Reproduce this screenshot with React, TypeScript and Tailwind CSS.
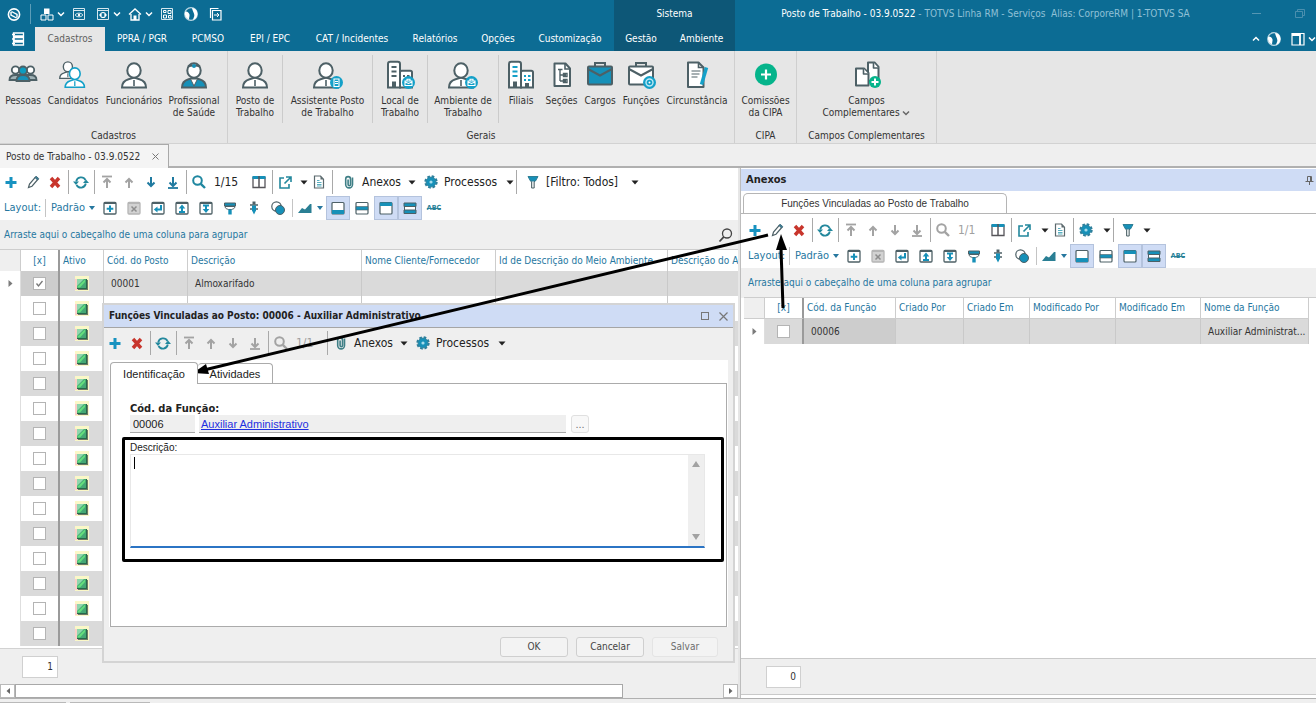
import { useState } from "react";
import type { ReactNode } from "react";
import { clsx } from "clsx";

const TEAL = "#1690b8";
const SLATE = "#4d6066";
const MUTED = "#a3a3a3";

/* ---------- Icons ---------- */

function Svg({ size = 16, box = 16, children }: { size?: number; box?: number; children: ReactNode }) {
  return (
    <svg width={size} height={size} viewBox={`0 0 ${box} ${box}`} fill="none" className="shrink-0" aria-hidden="true">
      {children}
    </svg>
  );
}

function PlusIcon() {
  return (
    <Svg>
      <path d="M8 3v11M2.5 8.5h11" stroke="#1792c0" strokeWidth="3" />
    </Svg>
  );
}

function PencilIcon() {
  return (
    <Svg>
      <path d="M3.5 13.5l1-3.5 6-7 2.5 2.2-6 7z" fill="#fff" stroke={SLATE} strokeWidth="1.2" />
      <path d="M10 3.5l1.2-1.2 2.5 2.2-1.2 1.5z" fill="#3f7f96" stroke="#3f6f80" />
    </Svg>
  );
}

function DeleteIcon() {
  return (
    <Svg>
      <path d="M4 4l8 9M12 4l-8 9" stroke="#c8352c" strokeWidth="3.4" />
    </Svg>
  );
}

function RefreshIcon() {
  return (
    <Svg>
      <path d="M3.2 7.5a5 5 0 0 1 9.3-1.5M12.8 9.5a5 5 0 0 1-9.3 1.5" stroke="#23889d" strokeWidth="1.8" />
      <path d="M0 7.5h6l-3 3.5zM10 9h6l-3-3.5z" fill="#23889d" />
    </Svg>
  );
}

function ArrowIcon({ kind, color }: { kind: "top" | "up" | "down" | "bottom"; color: string }) {
  const up = kind === "top" || kind === "up";
  return (
    <Svg>
      <path d={up ? "M8 14V5M4.5 8.5L8 5l3.5 3.5" : "M8 3v9M4.5 8.5L8 12l3.5-3.5"} stroke={color} strokeWidth="2" />
      {kind === "top" && <path d="M3 2.5h10" stroke={color} strokeWidth="1.8" />}
      {kind === "bottom" && <path d="M3 14h10" stroke={color} strokeWidth="1.8" />}
    </Svg>
  );
}

function SearchIcon({ color }: { color: string }) {
  return (
    <Svg>
      <circle cx="6.5" cy="6.5" r="4.3" stroke={color} strokeWidth="2" />
      <path d="M9.8 9.8l4.2 4.2" stroke={color} strokeWidth="2.4" />
    </Svg>
  );
}

function ColumnsIcon() {
  return (
    <Svg>
      <path d="M2 3.5h12v10H2z" stroke="#56555a" strokeWidth="1.3" />
      <path d="M1.5 2h13v3h-13z" fill={TEAL} />
      <path d="M8 2v11" stroke="#56555a" strokeWidth="1.5" />
    </Svg>
  );
}

function ExportIcon() {
  return (
    <Svg>
      <path d="M7 4H3v10h9v-4" stroke="#23889d" strokeWidth="1.6" />
      <path d="M9 3h5v5M13.5 3.5l-6 6" stroke="#23889d" strokeWidth="1.6" />
    </Svg>
  );
}

function DocIcon() {
  return (
    <Svg>
      <path d="M3.5 2h6l3 3.2V14h-9z" fill="#fff" stroke="#5a696d" strokeWidth="1.2" />
      <path d="M9.5 2v3.5h3z" fill="#5a696d" />
      <path d="M6 6.5h2.5M6 8.5h4.5M6 10.5h4.5M6 12h4.5" stroke="#59aebf" strokeWidth="1.2" />
    </Svg>
  );
}

function ClipIcon() {
  return (
    <Svg>
      <path
        d="M11.5 3.5v7a3.4 3.4 0 0 1-6.8 0V5a2.4 2.4 0 0 1 4.8 0v5.5a1.2 1.2 0 0 1-2.4 0V5.500"
        stroke="#3f7f86"
        strokeWidth="1.6"
      />
    </Svg>
  );
}

function GearIcon() {
  return (
    <Svg>
      <circle cx="8" cy="8" r="5.6" stroke="#2f7f9b" strokeWidth="2.2" strokeDasharray="2.6 1.8" />
      <circle cx="8" cy="8" r="5" fill={TEAL} stroke="#2f7f9b" strokeWidth=".8" />
      <circle cx="8" cy="8" r="1.6" fill="#a5dcec" />
    </Svg>
  );
}

function FunnelIcon() {
  return (
    <Svg>
      <path d="M5.5 6.5h4.5l-.8 1.5v6H6.6V8z" fill="#e8eef0" stroke={SLATE} strokeWidth="1" />
      <path d="M3 2.5h10l-2.500 4.5H5.500z" fill={TEAL} stroke="#2f7f96" strokeWidth="1" />
    </Svg>
  );
}

function Caret() {
  return (
    <svg width="8" height="5" viewBox="0 0 8 5" className="shrink-0" aria-hidden="true">
      <path d="M.5.5h7L4 4.5z" fill="#222" />
    </svg>
  );
}

function SmallCaret() {
  return (
    <svg width="6" height="4" viewBox="0 0 6 4" className="shrink-0" aria-hidden="true">
      <path d="M0 0h6L3 4z" fill="#26779f" />
    </svg>
  );
}

function Chevron({ color = "#fff", flip = false }: { color?: string; flip?: boolean }) {
  return (
    <svg width="8" height="6" viewBox="0 0 8 6" fill="none" className="inline shrink-0" aria-hidden="true">
      <path d={flip ? "M1 4.5l3-3 3 3" : "M1 1.5l3 3 3-3"} stroke={color} strokeWidth="1.5" />
    </svg>
  );
}

function BoxIcon({ children, muted = false }: { children?: ReactNode; muted?: boolean }) {
  const edge = muted ? "#b5b5b5" : SLATE;
  return (
    <Svg>
      <rect x="2" y="2.5" width="12" height="11.5" rx="1" fill={muted ? "#d2d2d2" : "#fff"} stroke={edge} strokeWidth="1.3" />
      <path d="M2 3h12" stroke={edge} strokeWidth="2" />
      {children}
    </Svg>
  );
}

function BrushIcon() {
  return (
    <Svg>
      <path d="M2.5 3h11v3h-11z" fill={TEAL} stroke={SLATE} />
      <path d="M3 6.5h10c0 2-2 2.5-3.5 3h-3C5 9 3 8.5 3 6.5z" fill="#fff" stroke={SLATE} />
      <path d="M6.3 9.5h3.4v5H6.3z" fill={TEAL} />
    </Svg>
  );
}

function PinBrushIcon() {
  return (
    <Svg>
      <path d="M6.5 1.5h3v3h-3z" fill={SLATE} />
      <path d="M4 5h8M4 9h8" stroke={SLATE} strokeWidth="1.6" />
      <path d="M6 5.5h4v5l-2 4-2-4z" fill={TEAL} />
    </Svg>
  );
}

function CirclesIcon() {
  return (
    <Svg>
      <circle cx="6.5" cy="6.5" r="4.7" fill="#fff" stroke={SLATE} strokeWidth="1.2" />
      <circle cx="10" cy="10" r="4.5" fill={TEAL} stroke={SLATE} />
    </Svg>
  );
}

function AreaIcon() {
  return (
    <Svg>
      <path d="M1 13l4-5 3 1.5L13 4h1.5v9z" fill="#2a7f94" />
    </Svg>
  );
}

function PanelIcon({ kind }: { kind: "bottom" | "middle" | "top" | "bands" }) {
  if (kind === "bands") {
    return (
      <Svg>
        <path d="M3 6.5h10V10H3z" fill="#fff" />
        <path d="M2 3h12v3.500H2zM2 10h12v3.500H2z" fill={TEAL} stroke={SLATE} strokeWidth="1" />
        <path d="M2.500 6.500V10M13.500 6.500V10" stroke={SLATE} />
      </Svg>
    );
  }
  return (
    <Svg>
      <rect x="2" y="2.5" width="12" height="11.5" rx="1" fill="#fff" stroke={SLATE} strokeWidth="1.2" />
      {kind === "bottom" && <path d="M2 10h12v4H2z" fill={TEAL} />}
      {kind === "middle" && <path d="M2 6.5h12V10H2z" fill={TEAL} stroke={SLATE} strokeWidth=".6" />}
      {kind === "top" && <path d="M2 2.5h12V6H2z" fill={TEAL} />}
    </Svg>
  );
}

function GlobeIcon() {
  return (
    <Svg>
      <circle cx="8" cy="8" r="6.3" stroke="#b9d6e2" strokeWidth="1.2" />
      <path
        d="M2 6c1.500-1.500 4 .5 4.500 2.500.3 1.500-.5 3-.5 4.800C3 12.500 1.500 9.500 2 6zM9 2c4 .2 5.800 3.500 5.300 7-.5 2.700-2.300 4.300-4.300 5 .2-1.800 1.500-3 1.300-5C11 6.500 9.500 5 9 2z"
        fill="#fff"
      />
    </Svg>
  );
}

function ActiveIcon() {
  return (
    <svg width="14" height="15" viewBox="0 0 14 15" className="mx-auto block" aria-label="Ativo">
      <rect width="14" height="15" fill="#fbf8c8" />
      <rect y="3" width="3" height="11" fill="#fbcfc8" />
      <rect x="3" y="4" width="10" height="10" fill="#6d7a66" />
      <rect x="2" y="3" width="10" height="10" fill="#26694a" />
      <rect x="2" y="3" width="9" height="9" fill="#45a874" />
      <path d="M2 3h7l-7 7z" fill="#8fd6ad" />
      <path d="M10 3.500v2.500L5 11.500H2.500V10.500z" fill="#63de7c" />
    </svg>
  );
}

/* 32x32 ribbon pictures */

function Person({ x = 0, stroke = SLATE, fill = "#fff" }: { x?: number; stroke?: string; fill?: string }) {
  return (
    <g transform={`translate(${x} 0)`} stroke={stroke} strokeWidth="2">
      <path d="M4 28.500c0-5 2.500-7 6.500-8.200l5.500-1.800 5.500 1.800c4 1.200 6.500 3.200 6.500 8.200z" fill={fill} />
      <ellipse cx="16" cy="11.5" rx="6.7" ry="7.3" fill="#fff" />
      <path d="M16 21v6" strokeWidth="1.6" />
    </g>
  );
}

function Badge({ children }: { children: ReactNode }) {
  return (
    <g>
      <circle cx="24.5" cy="23.5" r="6.5" fill="#14a0c8" />
      {children}
    </g>
  );
}

const caseBadge = (
  <Badge>
    <path d="M21 22h7v4.5h-7zM23 22v-1.8h3V22M21 23l3.5 1.5L28 23" stroke="#fff" strokeWidth="1.1" />
  </Badge>
);

function Buildings({ windows }: { windows: string }) {
  return (
    <g>
      <path d="M4 28.5V5c0-1.5 1-2.3 2.3-2.3h7.4c1.3 0 2.3.8 2.3 2.3v23.5z" fill="#fff" stroke={SLATE} strokeWidth="2" />
      <path d="M16 28.5v-15c0-1 .8-1.7 1.700-1.700h8.600c1 0 1.700.7 1.700 1.700v15z" fill="#fff" stroke={SLATE} strokeWidth="2" />
      <path d="M7.5 8h5M7.5 12.5h5M7.5 17h5M19 17h2M23 17h2.5M19 21h2M23 21h2.5" stroke={windows} strokeWidth="2" />
      <path d="M8 22.5h4v6H8zM20 24h4v4.5h-4z" fill={SLATE} />
    </g>
  );
}

function Briefcase({ fill }: { fill: string }) {
  return (
    <g stroke={SLATE} strokeWidth="2">
      <path d="M11 7V4h10v3" />
      <rect x="4" y="7.5" width="24" height="18" rx="1" fill={fill} />
      <path d="M4 10l12 6.5L28 10" fill="none" />
    </g>
  );
}

const ribbonIcons: Record<string, ReactNode> = {
  people: (
    <g strokeWidth="1.8" stroke={SLATE}>
      <path d="M2.5 21c0-3.500 2-5 6-5h15c4 0 6 1.500 6 5z" fill="#9fb1b5" />
      <circle cx="8.500" cy="11" r="3.7" fill="#fff" />
      <circle cx="23.500" cy="11" r="3.7" fill="#fff" />
      <path d="M9.5 22c0-4.500 2-6 6.500-6s6.500 1.500 6.500 6z" fill={TEAL} />
      <circle cx="16" cy="11.5" r="4" fill="#0d9cc0" />
    </g>
  ),
  candidates: (
    <g>
      <g transform="translate(0 0) scale(.68)">
        <Person />
      </g>
      <g transform="translate(5 5.5) scale(.8)">
        <Person stroke="#12a0c8" />
      </g>
    </g>
  ),
  person: <Person />,
  doctor: (
    <g>
      <Person fill={TEAL} />
      <path d="M12.500 20h7L16 27z" fill="#fff" stroke={SLATE} />
      <path d="M10 7.500c3-1.500 9-1.500 12 0" stroke={SLATE} strokeWidth="2" />
      <circle cx="16" cy="7" r="2" fill={TEAL} />
    </g>
  ),
  assistant: (
    <g>
      <Person x={-2} />
      <Badge>
        <path d="M22 20h5v7.5h-5zM23 22.5h3M23 24.5h3" stroke="#fff" strokeWidth="1.1" />
      </Badge>
    </g>
  ),
  place: (
    <g>
      <Buildings windows={SLATE} />
      {caseBadge}
    </g>
  ),
  environment: (
    <g>
      <Person x={-2} />
      {caseBadge}
    </g>
  ),
  branches: <Buildings windows="#14a0c8" />,
  sections: (
    <g stroke={SLATE}>
      <path d="M8.500 4.500h11l4.500 5V27H8.500z" fill="#fff" strokeWidth="2" strokeLinejoin="round" />
      <path d="M19 4.500V10h5" strokeWidth="1.6" />
      <path d="M12 10.500h4.500M14 10.500V22M14 16h6M14 22h6M17.500 14.500H21v3h-3.500zM17.500 20.500H21v3h-3.500z" strokeWidth="1.4" />
    </g>
  ),
  jobs: <Briefcase fill={TEAL} />,
  roles: (
    <g>
      <Briefcase fill="#fff" />
      <Badge>
        <circle cx="24.5" cy="23.5" r="3.5" stroke="#bfe9f5" strokeWidth="1.4" />
        <circle cx="24.5" cy="23.5" r="1" fill="#fff" />
      </Badge>
    </g>
  ),
  circumstance: (
    <g>
      <path d="M7 3.500h10.500l5 5V28H7z" fill="#fff" stroke={SLATE} strokeWidth="2" strokeLinejoin="round" />
      <path d="M17.500 3.500v5h5" stroke={SLATE} strokeWidth="1.6" />
      <path d="M10.500 12h9M10.500 15h8M10.500 18h6" stroke="#8a979b" strokeWidth="1.3" />
      <path d="M25.500 8.500l-5 17" stroke="#14a0c8" strokeWidth="3.5" />
    </g>
  ),
  cipa: (
    <g>
      <circle cx="16" cy="15.5" r="11" fill="#05b48b" />
      <path d="M16 10.500v10M11 15.500h10" stroke="#fff" strokeWidth="2.2" />
    </g>
  ),
  fields: (
    <g>
      <g stroke={SLATE} strokeWidth="2" strokeLinejoin="round" fill="#fff">
        <path d="M17 3.500h6.500l4 4.500V22H17z" />
        <path d="M22.500 3.500V9h5" strokeWidth="1.6" />
        <path d="M5 9.500h8l4.500 4.500v12.500H5z" />
        <path d="M12.500 9.500V15h5" strokeWidth="1.6" />
      </g>
      <circle cx="24" cy="23" r="6" fill="#05b48b" />
      <path d="M24 19.500v7M20.500 23h7" stroke="#fff" strokeWidth="2" />
    </g>
  ),
};

/* ---------- Header ---------- */

const menuTabs = [
  { label: "Cadastros", width: "w-[70px]" },
  { label: "PPRA / PGR", width: "w-[74px]" },
  { label: "PCMSO", width: "w-[58px]" },
  { label: "EPI / EPC", width: "w-[66px]" },
  { label: "CAT / Incidentes", width: "w-[98px]" },
  { label: "Relatórios", width: "w-[68px]" },
  { label: "Opções", width: "w-[58px]" },
  { label: "Customização", width: "w-[86px]" },
];

function QuickButton({ label, menu = false, children }: { label: string; menu?: boolean; children: ReactNode }) {
  return (
    <button type="button" aria-label={label} className="flex items-center">
      <span className="flex w-5 justify-center">{children}</span>
      {menu && <Chevron />}
    </button>
  );
}

function Header() {
  const [active, setActive] = useState("Cadastros");
  return (
    <header className="flex h-[51px] bg-[#0c6c94] text-white">
      <div className="flex w-[614px] shrink-0 flex-col">
        <div className="flex h-[27px] items-center gap-1 pl-1">
          <QuickButton label="TOTVS">
            <Svg>
              <circle cx="8" cy="8.5" r="5.6" stroke="#fff" strokeWidth="1.6" />
              <path d="M5.5 5.5l5.5 3v3M5 6v3l5.5 3" stroke="#fff" strokeWidth="1.4" />
            </Svg>
          </QuickButton>
          <span className="mx-[2px] h-5 w-px bg-[#5c9db8]" />
          <QuickButton label="Módulos" menu>
            <Svg>
              <path d="M5 2.5h5.5V8H5z" fill="#fff" />
              <path d="M2 9h5v5H2zM9 9h5v5H9z" stroke="#fff" />
            </Svg>
          </QuickButton>
          <QuickButton label="Visualizar">
            <Svg>
              <path d="M2.5 2.5h11v11h-11zM2.5 4.500h11" stroke="#d6e7ee" />
              <path d="M4 9c2-2.5 6-2.5 8 0-2 2.500-6 2.500-8 0z" stroke="#d6e7ee" />
              <circle cx="8" cy="9" r="1.2" fill="#fff" />
            </Svg>
          </QuickButton>
          <QuickButton label="Atualizar visão" menu>
            <Svg>
              <path d="M2.5 2.5h11v11h-11zM2.5 4.500h11" stroke="#d6e7ee" />
              <circle cx="8" cy="9" r="2.5" stroke="#fff" strokeWidth="1.2" />
              <path d="M4 9h3M9 9h3" stroke="#fff" />
            </Svg>
          </QuickButton>
          <QuickButton label="Início" menu>
            <Svg>
              <path d="M2 8.5l6-5.500 6 5.500M4 8v6h8V8" stroke="#fff" strokeWidth="1.3" />
              <path d="M6.5 9.500h3V14h-3z" fill="#fff" />
            </Svg>
          </QuickButton>
          <QuickButton label="Painéis">
            <Svg>
              <path d="M2.5 2.5h11v11h-11z" stroke="#d6e7ee" />
              <path d="M4.5 4.5H7v2H4.500zM9 4.500h3v3H9zM4.500 9h3v3h-3zM9.500 9.500H12V12H9.500z" stroke="#fff" />
            </Svg>
          </QuickButton>
          <QuickButton label="Idioma">
            <GlobeIcon />
          </QuickButton>
          <QuickButton label="Sair">
            <Svg>
              <path d="M3.500 12V2.500h8M5.500 4.500H14V14H5.500z" stroke="#fff" strokeWidth="1.2" />
              <path d="M7 9h5M10 7l2 2-2 2" stroke="#fff" />
            </Svg>
          </QuickButton>
        </div>
        <nav className="flex h-6">
          <button type="button" aria-label="Menu" className="flex w-[35px] items-center justify-center">
            <Svg>
              <path d="M3.500 2h10v3h-10zM3.500 6.500h10v3h-10zM3.500 11h10v3h-10z" stroke="#fff" strokeWidth="1.3" />
              <path d="M2 3.500h3M2 8h3M2 12.500h3" stroke="#fff" strokeWidth="1.3" />
            </Svg>
          </button>
          {menuTabs.map((tab) => (
            <button
              key={tab.label}
              type="button"
              onClick={() => setActive(tab.label)}
              className={clsx(tab.width, "whitespace-nowrap", active === tab.label && "bg-[#e6e6e6] text-[#5f5f5f]")}
            >
              {tab.label}
            </button>
          ))}
        </nav>
      </div>

      <div className="flex w-[121px] shrink-0 flex-col bg-[#0d5777]">
        <div className="flex h-[27px] items-center justify-center">Sistema</div>
        <div className="flex h-6">
          <button type="button" className="w-[54px]">Gestão</button>
          <button type="button" className="w-[67px]">Ambiente</button>
        </div>
      </div>

      <div className="flex min-w-0 flex-1 flex-col">
        <div className="flex h-[27px] items-center">
          <h1 className="flex-1 whitespace-pre text-center text-[#8fc0d6]">
            <span className="text-white">Posto de Trabalho - 03.9.0522</span> - TOTVS Linha RM - Serviços{"  "}Alias: CorporeRM | 1-TOTVS SA
          </h1>
          <button type="button" aria-label="Minimizar" className="flex w-10 justify-center">
            <span className="h-px w-[9px] bg-[#5596b3]" />
          </button>
          <button type="button" aria-label="Restaurar" className="flex w-10 justify-center pl-2">
            <Svg size={12} box={12}>
              <path d="M1.500 3.500h7v6h-7zM3.500 3.500v-2h7v6h-2" stroke="#4a8fae" />
            </Svg>
          </button>
        </div>
        <div className="flex h-6 items-center justify-end gap-1">
          <button type="button" aria-label="Recolher" className="flex"><Chevron flip /></button>
          <QuickButton label="Idioma"><GlobeIcon /></QuickButton>
          <QuickButton label="Painel" menu>
            <Svg>
              <path d="M2 2.5h12V14H2z" stroke="#fff" strokeWidth="1.2" />
              <path d="M2 2.5h8v2.500H2z" fill="#fff" />
              <path d="M10 2.500V14" stroke="#fff" strokeWidth="1.800" />
            </Svg>
          </QuickButton>
        </div>
      </div>
    </header>
  );
}

/* ---------- Ribbon ---------- */

function RibbonButton({ icon, width, lines, menu = false }: { icon: string; width: string; lines: string[]; menu?: boolean }) {
  return (
    <button type="button" className={clsx(width, "flex shrink-0 flex-col items-center pt-2 leading-3 whitespace-nowrap")}>
      <Svg size={32} box={32}>{ribbonIcons[icon]}</Svg>
      <span className="mt-1 block">{lines[0]}</span>
      {lines[1] && (
        <span className="block">
          {lines[1]} {menu && <Chevron color="#666" />}
        </span>
      )}
    </button>
  );
}

function RibbonGroup({ title, width, children }: { title: string; width: string; children: ReactNode }) {
  return (
    <section className={clsx(width, "flex shrink-0 flex-col border-r border-[#cfcfcf]")}>
      <div className="flex flex-1">{children}</div>
      <div className="h-[15px] text-center leading-[15px]">{title}</div>
    </section>
  );
}

function RibbonRule() {
  return <span className="mt-1 h-[68px] w-px bg-[#cbcbcb]" />;
}

function Ribbon() {
  return (
    <div className="flex h-[93px] border-b border-[#d2d2d2] bg-[#e6e6e6] text-[#333]">
      <RibbonGroup title="Cadastros" width="w-[228px]">
        <RibbonButton icon="people" width="w-[46px]" lines={["Pessoas"]} />
        <RibbonButton icon="candidates" width="w-[54px]" lines={["Candidatos"]} />
        <RibbonButton icon="person" width="w-[68px]" lines={["Funcionários"]} />
        <RibbonButton icon="doctor" width="w-[52px]" lines={["Profissional", "de Saúde"]} />
      </RibbonGroup>
      <RibbonGroup title="Gerais" width="w-[507px]">
        <RibbonButton icon="person" width="w-[54px]" lines={["Posto de", "Trabalho"]} />
        <RibbonRule />
        <RibbonButton icon="assistant" width="w-[89px]" lines={["Assistente Posto", "de Trabalho"]} />
        <RibbonRule />
        <RibbonButton icon="place" width="w-[54px]" lines={["Local de", "Trabalho"]} />
        <RibbonRule />
        <RibbonButton icon="environment" width="w-[70px]" lines={["Ambiente de", "Trabalho"]} />
        <RibbonRule />
        <RibbonButton icon="branches" width="w-[44px]" lines={["Filiais"]} />
        <RibbonButton icon="sections" width="w-[37px]" lines={["Seções"]} />
        <RibbonButton icon="jobs" width="w-[40px]" lines={["Cargos"]} />
        <RibbonButton icon="roles" width="w-[42px]" lines={["Funções"]} />
        <RibbonButton icon="circumstance" width="w-[70px]" lines={["Circunstância"]} />
      </RibbonGroup>
      <RibbonGroup title="CIPA" width="w-[62px]">
        <RibbonButton icon="cipa" width="w-[61px]" lines={["Comissões", "da CIPA"]} />
      </RibbonGroup>
      <RibbonGroup title="Campos Complementares" width="w-[140px]">
        <RibbonButton icon="fields" width="w-[139px]" lines={["Campos", "Complementares"]} menu />
      </RibbonGroup>
    </div>
  );
}

/* ---------- Toolbars ---------- */

function ToolButton({ label, children, on = false, wide = false }: { label: string; children: ReactNode; on?: boolean; wide?: boolean }) {
  return (
    <button
      type="button"
      aria-label={label}
      className={clsx(
        "flex h-6 shrink-0 items-center justify-center",
        wide ? "w-6" : "w-[22px]",
        on && "border border-[#b4c3dd] bg-[#cfdcf5]",
      )}
    >
      {children}
    </button>
  );
}

function ToolRule({ short = false }: { short?: boolean }) {
  return <span className={clsx("mr-px ml-[2px] w-px shrink-0", short ? "h-[18px] bg-[#c4c4c4]" : "h-6 bg-[#a9a9a9]")} />;
}

function ToolMenu({ label, width, icon, text }: { label: string; width: string; icon: ReactNode; text?: string }) {
  return (
    <button type="button" aria-label={label} className={clsx(width, "flex h-6 shrink-0 items-center")}>
      <span className="flex w-[22px] shrink-0 justify-center">{icon}</span>
      {text && <span className="ml-[2px] whitespace-nowrap text-xs">{text}</span>}
      <span className="ml-auto flex"><Caret /></span>
    </button>
  );
}

interface RecordToolbarProps {
  position: string;
  browsing?: boolean;
  editable?: boolean;
  children?: ReactNode;
}

function RecordToolbar({ position, browsing = false, editable = true, children }: RecordToolbarProps) {
  const next = browsing ? "#1f7aa0" : MUTED;
  return (
    <div role="toolbar" className="flex h-7 items-center text-[#222]">
      <ToolButton label="Incluir"><PlusIcon /></ToolButton>
      {editable && <ToolButton label="Editar"><PencilIcon /></ToolButton>}
      <ToolButton label="Excluir"><DeleteIcon /></ToolButton>
      <ToolRule />
      <ToolButton label="Atualizar"><RefreshIcon /></ToolButton>
      <ToolRule />
      <ToolButton label="Primeiro"><ArrowIcon kind="top" color={MUTED} /></ToolButton>
      <ToolButton label="Anterior"><ArrowIcon kind="up" color={MUTED} /></ToolButton>
      <ToolButton label="Próximo"><ArrowIcon kind="down" color={next} /></ToolButton>
      <ToolButton label="Último"><ArrowIcon kind="bottom" color={next} /></ToolButton>
      <ToolRule />
      <ToolButton label="Procurar"><SearchIcon color={browsing ? "#1f87a0" : MUTED} /></ToolButton>
      <span className={clsx("shrink-0 pl-1 text-xs", browsing ? "w-[38px]" : "w-[33px] text-[#a0a0a0]")}>{position}</span>
      {children}
    </div>
  );
}

function LayoutToolbar() {
  return (
    <div role="toolbar" className="flex h-6 items-center text-[11px] text-[#26779f]">
      <span className="w-[43px] shrink-0 pl-1">Layout:</span>
      <ToolRule short />
      <button type="button" className="flex h-6 w-[51px] shrink-0 items-center gap-1 pl-1">
        Padrão
        <SmallCaret />
      </button>
      <ToolButton wide label="Novo layout">
        <BoxIcon><path d="M8 5.500V12M4.700 8.800h6.600" stroke={TEAL} strokeWidth="2" /></BoxIcon>
      </ToolButton>
      <ToolButton wide label="Remover layout">
        <BoxIcon muted><path d="M5.500 6.500l5 5M10.500 6.500l-5 5" stroke="#8d8d8d" strokeWidth="1.5" /></BoxIcon>
      </ToolButton>
      <ToolButton wide label="Restaurar layout">
        <BoxIcon><path d="M11 5v4.500H6" stroke={TEAL} strokeWidth="2" /><path d="M7.500 6.500v6L3.800 9.500z" fill={TEAL} /></BoxIcon>
      </ToolButton>
      <ToolButton wide label="Exportar layout">
        <BoxIcon><path d="M8 7v5.500M5 12h6" stroke={TEAL} strokeWidth="2" /><path d="M4.700 8.500h6.600L8 4.500z" fill={TEAL} /></BoxIcon>
      </ToolButton>
      <ToolButton wide label="Importar layout">
        <BoxIcon><path d="M8 5v5M5 5.500h6" stroke={TEAL} strokeWidth="2" /><path d="M4.700 9h6.600L8 13z" fill={TEAL} /></BoxIcon>
      </ToolButton>
      <ToolButton wide label="Formatar"><BrushIcon /></ToolButton>
      <ToolButton wide label="Fixar formato"><PinBrushIcon /></ToolButton>
      <ToolButton wide label="Cores"><CirclesIcon /></ToolButton>
      <ToolRule short />
      <button type="button" aria-label="Gráfico" className="mr-[3px] flex h-6 w-[29px] shrink-0 items-center gap-1 pl-[3px]">
        <AreaIcon />
        <SmallCaret />
      </button>
      <ToolButton wide on label="Rodapé"><PanelIcon kind="bottom" /></ToolButton>
      <ToolButton wide label="Linha central"><PanelIcon kind="middle" /></ToolButton>
      <ToolButton wide on label="Cabeçalho"><PanelIcon kind="top" /></ToolButton>
      <ToolButton wide on label="Linhas alternadas"><PanelIcon kind="bands" /></ToolButton>
      <ToolButton wide label="Quebra de texto">
        <span className="text-[7px] font-bold text-[#2a8299] line-through">ABC</span>
      </ToolButton>
    </div>
  );
}

function GroupBar({ children }: { children?: ReactNode }) {
  return (
    <div className="flex h-[30px] items-center justify-between border-b border-[#cdcdcd] bg-[#efefef] px-1 text-[#26779f]">
      Arraste aqui o cabeçalho de uma coluna para agrupar
      {children}
    </div>
  );
}

function TickBox({ label, checked = false }: { label: string; checked?: boolean }) {
  return (
    <span className="mx-auto grid size-[13px]">
      <input
        type="checkbox"
        aria-label={label}
        defaultChecked={checked}
        className="peer col-start-1 row-start-1 size-[13px] appearance-none border border-[#b4b4b4] bg-white"
      />
      <svg
        width="13"
        height="13"
        viewBox="0 0 13 13"
        fill="none"
        className="pointer-events-none invisible col-start-1 row-start-1 peer-checked:visible"
        aria-hidden="true"
      >
        <path d="M3.500 6.500l2 2.500 4-5" stroke="#777" strokeWidth="1.3" />
      </svg>
    </span>
  );
}

function RowMarker() {
  return (
    <svg width="5" height="7" viewBox="0 0 5 7" className="mx-auto block" aria-hidden="true">
      <path d="M.5 0l4 3.500-4 3.500z" fill="#7b7b7b" />
    </svg>
  );
}

/* ---------- Left grid ---------- */

const headCell = "border-r border-[#cdcdcd] px-[3px] text-left font-normal whitespace-nowrap overflow-hidden";
const bodyCell = "border-r border-[#c9c9c9] px-[7px] whitespace-nowrap overflow-hidden";

function PostoGrid() {
  const rows = Array.from({ length: 15 }, (_, i) => i);
  return (
    <div className="flex-1 overflow-hidden bg-white">
      <table className="w-full table-fixed border-separate border-spacing-0">
        <colgroup>
          <col className="w-[21px]" />
          <col className="w-[39px]" />
          <col className="w-[44px]" />
          <col className="w-[84px]" />
          <col className="w-[174px]" />
          <col className="w-[134px]" />
          <col className="w-[172px]" />
          <col />
        </colgroup>
        <thead>
          <tr className="h-[21px] text-[#26779f]">
            <th className="border-r border-[#cdcdcd] bg-[#efefef]" aria-label="Marcador" />
            <th className="border-r-2 border-[#9a9a9a] p-0 text-center font-normal">[x]</th>
            <th className={headCell}>Ativo</th>
            <th className={headCell}>Cód. do Posto</th>
            <th className={headCell}>Descrição</th>
            <th className={headCell}>Nome Cliente/Fornecedor</th>
            <th className={headCell}>Id de Descrição do Meio Ambiente</th>
            <th className="overflow-hidden py-0 pr-0 pl-[3px] text-left font-normal whitespace-nowrap">Descrição do Am</th>
          </tr>
        </thead>
        <tbody>
          {rows.map((i) => (
            <tr key={i} className={clsx("h-[25px]", i % 2 === 0 && "bg-[#dadada]")}>
              <td className="border-r border-[#dedede] bg-white p-0">{i === 0 && <RowMarker />}</td>
              <td className={clsx("border-r-2 border-[#9a9a9a] p-0", i === 0 && "bg-[#cdcdcd]")}>
                <TickBox label={`Selecionar linha ${i + 1}`} checked={i === 0} />
              </td>
              <td className="border-r border-[#c9c9c9] p-0"><ActiveIcon /></td>
              <td className={bodyCell}>{i === 0 && "00001"}</td>
              <td className={bodyCell}>{i === 0 && "Almoxarifado"}</td>
              <td className={bodyCell} />
              <td className={bodyCell} />
              <td />
            </tr>
          ))}
        </tbody>
      </table>
    </div>
  );
}

function PostoPanel() {
  return (
    <section className="relative flex min-w-0 flex-col overflow-hidden bg-white">
      <RecordToolbar position="1/15" browsing>
        <ToolButton label="Colunas"><ColumnsIcon /></ToolButton>
        <ToolRule />
        <ToolMenu label="Exportar" width="w-[34px]" icon={<ExportIcon />} />
        <ToolButton label="Relatório"><DocIcon /></ToolButton>
        <ToolRule />
        <ToolMenu label="Anexos" width="ml-1 w-[78px]" icon={<ClipIcon />} text="Anexos" />
        <ToolMenu label="Processos" width="ml-1 w-[94px]" icon={<GearIcon />} text="Processos" />
        <ToolRule />
        <ToolMenu label="Filtro" width="ml-1 w-[117px]" icon={<FunnelIcon />} text="[Filtro: Todos]" />
      </RecordToolbar>
      <LayoutToolbar />
      <GroupBar>
        <button type="button" aria-label="Localizar" className="flex">
          <Svg>
            <circle cx="9" cy="6.5" r="4.5" stroke="#444" strokeWidth="1.3" />
            <path d="M5.8 9.8l-4.300 4.700" stroke="#444" strokeWidth="1.8" />
          </Svg>
        </button>
      </GroupBar>
      <PostoGrid />
      <div className="flex h-9 items-center border-t border-[#d2d2d2] bg-[#efefef] pl-[22px]">
        <output className="h-[22px] w-9 border border-[#d0d0d0] bg-white pr-1 text-right leading-5">1</output>
      </div>
      <div className="flex h-[14px] bg-[#efefef]">
        <button type="button" aria-label="Rolar à esquerda" className="flex w-[15px] items-center justify-center border border-[#b9b9b9] bg-white">
          <svg width="4" height="6" viewBox="0 0 4 6" aria-hidden="true"><path d="M4 0L.5 3 4 6z" fill="#666" /></svg>
        </button>
        <span className="w-[608px] border border-[#a8a8a8] bg-white" />
        <button type="button" aria-label="Rolar à direita" className="ml-auto flex w-[15px] items-center justify-center border border-[#b9b9b9] bg-white">
          <svg width="4" height="6" viewBox="0 0 4 6" aria-hidden="true"><path d="M0 0l3.500 3L0 6z" fill="#666" /></svg>
        </button>
      </div>
      <FuncaoDialog />
    </section>
  );
}

/* ---------- Dialog ---------- */

function FuncaoDialog() {
  return (
    <div
      role="dialog"
      aria-labelledby="dialog-title"
      className="absolute top-[135px] left-[102px] flex h-[360px] w-[633px] flex-col border-2 border-[#d4d4d4] bg-[#efefef]"
    >
      <div className="flex h-[23px] shrink-0 items-center border-b border-[#a5a5a5] bg-[#cfdcf5] pl-[5px]">
        <h2 id="dialog-title" className="flex-1 font-bold whitespace-nowrap text-[#222]">
          Funções Vinculadas ao Posto: 00006 - Auxiliar Administrativo
        </h2>
        <button type="button" aria-label="Maximizar" className="flex w-[19px] justify-center">
          <span className="size-2 border border-[#777]" />
        </button>
        <button type="button" aria-label="Fechar" className="flex w-[19px] justify-center">
          <Svg size={9} box={9}><path d="M.5.5l8 8M8.5.5l-8 8" stroke="#777" strokeWidth="1.2" /></Svg>
        </button>
      </div>
      <div className="h-8 shrink-0 pt-px">
        <RecordToolbar position="1/1" editable={false}>
          <ToolRule />
          <ToolMenu label="Anexos" width="ml-px w-[78px]" icon={<ClipIcon />} text="Anexos" />
          <ToolMenu label="Processos" width="ml-1 w-[94px]" icon={<GearIcon />} text="Processos" />
        </RecordToolbar>
      </div>

      <div className="mx-[5px] flex flex-1 flex-col bg-white font-['Liberation_Sans',Arial,sans-serif] text-[11px] text-[#222]">
        <div role="tablist" className="flex h-[23px] items-end pl-px">
          <button type="button" role="tab" aria-selected="true" className="z-10 -mb-px h-[22px] w-[88px] rounded-t-[4px] border border-b-0 border-[#ababab] bg-white">
            Identificação
          </button>
          <button type="button" role="tab" aria-selected="false" className="h-5 w-[75px] rounded-t-[4px] border border-b-0 border-l-0 border-[#ababab] bg-white">
            Atividades
          </button>
        </div>
        <div className="mx-px flex-1 border border-[#ababab] pt-[19px] pl-[11px]">
          <label htmlFor="codigo" className="ml-2 block h-3 font-['DejaVu_Sans_Condensed','DejaVu_Sans',sans-serif] leading-3 font-bold">
            Cód. da Função:
          </label>
          <div className="ml-2 flex">
            <input id="codigo" defaultValue="00006" readOnly className="h-[18px] w-[65px] border-b border-[#a8a8a8] bg-[#efefef] px-[3px]" />
            <span className="ml-1 flex h-[18px] w-[367px] items-center border-b border-[#a8a8a8] bg-[#efefef] pl-[2px]">
              <a href="#auxiliar-administrativo" className="text-[#1f2fe0] underline">Auxiliar Administrativo</a>
            </span>
            <button type="button" aria-label="Procurar função" className="ml-[5px] h-[18px] w-[18px] rounded-[3px] border border-[#e0e0e0] bg-[#f8f8f8] leading-4 text-[#777]">
              ...
            </button>
          </div>
          <div className="mt-1 h-[125px] w-[602px] rounded-[2px] border-3 border-black pt-[2px] pl-[5px]">
            <label htmlFor="descricao" className="block h-3 text-[10px] leading-3">Descrição:</label>
            <div className="relative flex h-[94px] w-[575px] border border-b-2 border-[#e8e8e8] border-b-[#2b74c4]">
              <textarea id="descricao" className="flex-1 resize-none px-[3px] outline-none" />
              <span className="absolute top-[2px] left-[3px] h-3 w-px bg-black" />
              <div className="flex w-4 flex-col justify-between bg-[#efefef] py-[6px]">
                <svg width="8" height="6" viewBox="0 0 8 6" className="mx-auto" aria-hidden="true"><path d="M0 6l4-6 4 6z" fill="#a2a2a2" /></svg>
                <svg width="8" height="6" viewBox="0 0 8 6" className="mx-auto" aria-hidden="true"><path d="M0 0l4 6 4-6z" fill="#a2a2a2" /></svg>
              </div>
            </div>
          </div>
        </div>
      </div>

      <div className="flex h-[34px] shrink-0 items-center justify-end gap-2 pt-[6px] pr-[15px] text-[#444]">
        <button type="button" className="h-5 w-[68px] rounded-[3px] border border-[#cfcfcf] bg-[#f3f3f3]">OK</button>
        <button type="button" className="h-5 w-[68px] rounded-[3px] border border-[#cfcfcf] bg-[#f3f3f3]">Cancelar</button>
        <button type="button" disabled className="h-5 w-[66px] rounded-[3px] border border-[#e4e4e4] bg-[#f3f3f3] text-[#6d6d6d]">Salvar</button>
      </div>
    </div>
  );
}

/* ---------- Right panel ---------- */

function AnexosPanel() {
  return (
    <aside className="flex min-w-0 flex-col border-l border-[#bdbdbd] bg-white">
      <div className="mt-px flex h-[22px] items-center justify-between bg-[#cfdcf5] pr-[2px] pl-[5px]">
        <h2 className="text-[11px] font-bold text-[#222]">Anexos</h2>
        <button type="button" aria-label="Fixar painel" className="flex">
          <Svg size={9} box={9}><path d="M2.5.5h4v5M2.5.5v5M.5 5.5h8M4.5 5.5V9M5.5.5v5" stroke="#666" /></Svg>
        </button>
      </div>
      <div role="tablist" className="flex h-[23px] items-end border-b border-[#b5b5b5] pl-[2px]">
        <button type="button" role="tab" aria-selected="true" className="h-5 w-[264px] rounded-t-[5px] border border-b-0 border-[#b5b5b5] font-['Liberation_Sans',Arial,sans-serif] text-[#333]">
          Funções Vinculadas ao Posto de Trabalho
        </button>
      </div>
      <div className="pt-[2px] pl-[3px]">
        <RecordToolbar position="1/1">
          <ToolButton label="Colunas"><ColumnsIcon /></ToolButton>
          <ToolRule />
          <ToolMenu label="Exportar" width="w-[36px]" icon={<ExportIcon />} />
          <ToolButton label="Relatório"><DocIcon /></ToolButton>
          <ToolRule />
          <ToolMenu label="Processos" width="w-[36px]" icon={<GearIcon />} />
          <ToolRule />
          <ToolMenu label="Filtro" width="ml-[2px] w-[34px]" icon={<FunnelIcon />} />
        </RecordToolbar>
      </div>
      <div className="pl-[3px]">
        <LayoutToolbar />
      </div>
      <div className="bg-[#efefef] pl-[3px]">
        <GroupBar />
      </div>
      <div className="flex-1 pl-[3px]">
        <table className="w-[565px] table-fixed border-separate border-spacing-0">
          <colgroup>
            <col className="w-[21px]" />
            <col className="w-[39px]" />
            <col className="w-[92px]" />
            <col className="w-[68px]" />
            <col className="w-[66px]" />
            <col className="w-[86px]" />
            <col className="w-[85px]" />
            <col />
          </colgroup>
          <thead>
            <tr className="h-[21px] text-[#26779f]">
              <th className="border-r border-b border-[#cdcdcd] bg-[#efefef]" aria-label="Marcador" />
              <th className="border-r-2 border-b border-[#9a9a9a] border-b-[#cdcdcd] p-0 text-center font-normal">[x]</th>
              {["Cód. da Função", "Criado Por", "Criado Em", "Modificado Por", "Modificado Em", "Nome da Função"].map((name) => (
                <th key={name} className={clsx(headCell, "border-b")}>{name}</th>
              ))}
            </tr>
          </thead>
          <tbody>
            <tr className="h-[25px] bg-[#dadada]">
              <td className="border-r border-[#dedede] bg-white p-0"><RowMarker /></td>
              <td className="border-r-2 border-[#9a9a9a] p-0"><TickBox label="Selecionar função 00006" /></td>
              <td className={clsx(bodyCell, "bg-[#cdcdcd]")}>00006</td>
              <td className={bodyCell} />
              <td className={bodyCell} />
              <td className={bodyCell} />
              <td className={bodyCell} />
              <td className={bodyCell}>Auxiliar Administrat...</td>
            </tr>
          </tbody>
        </table>
      </div>
      <div className="mb-[3px] flex h-[37px] items-center border-t border-b border-[#c9c9c9] bg-[#efefef] pl-[25px]">
        <output className="h-[22px] w-[35px] border border-[#d0d0d0] bg-white pr-1 text-right leading-5">0</output>
      </div>
    </aside>
  );
}

/* Arrows drawn across the windows: edit pencil -> tab, row -> edit pencil */
function Callouts() {
  return (
    <svg width="1316" height="703" viewBox="0 0 1316 703" className="pointer-events-none absolute top-0 left-0" aria-hidden="true">
      <path d="M768 235L204 370" stroke="#000" strokeWidth="3" />
      <path d="M193 373l13-9 3 10z" fill="#000" />
      <path d="M783 308l-2-60" stroke="#000" strokeWidth="3" />
      <path d="M781 234l6 16h-11z" fill="#000" />
    </svg>
  );
}

export default function App() {
  return (
    <div className="relative flex min-h-screen flex-col overflow-hidden bg-[#efefef] font-['DejaVu_Sans_Condensed','DejaVu_Sans',sans-serif] text-[10px] leading-[14px] text-[#333]">
      <Header />
      <Ribbon />
      <div className="flex h-6 items-end border-b-2 border-[#b0b0b0]">
        <div className="-mb-[2px] flex h-6 w-[169px] items-center border-t border-r border-[#a9a9a9] bg-[#f4f4f4] pl-[6px] whitespace-nowrap">
          Posto de Trabalho - 03.9.0522
          <button type="button" aria-label="Fechar aba" className="ml-3 flex">
            <Svg size={7} box={7}><path d="M.5.5l6 6M6.5.5l-6 6" stroke="#777" /></Svg>
          </button>
        </div>
      </div>
      <main className="grid flex-1 grid-cols-[738fr_578fr]">
        <PostoPanel />
        <div className="grid border-l-2 border-[#e6e6e6]">
          <AnexosPanel />
        </div>
      </main>
      <footer className="flex h-[5px] items-end gap-1 border-t border-[#b0b0b0]">
        <span className="h-px w-[66px] bg-[#b9b9b9]" />
        <span className="h-px w-20 bg-[#b9b9b9]" />
      </footer>
      <Callouts />
    </div>
  );
}
